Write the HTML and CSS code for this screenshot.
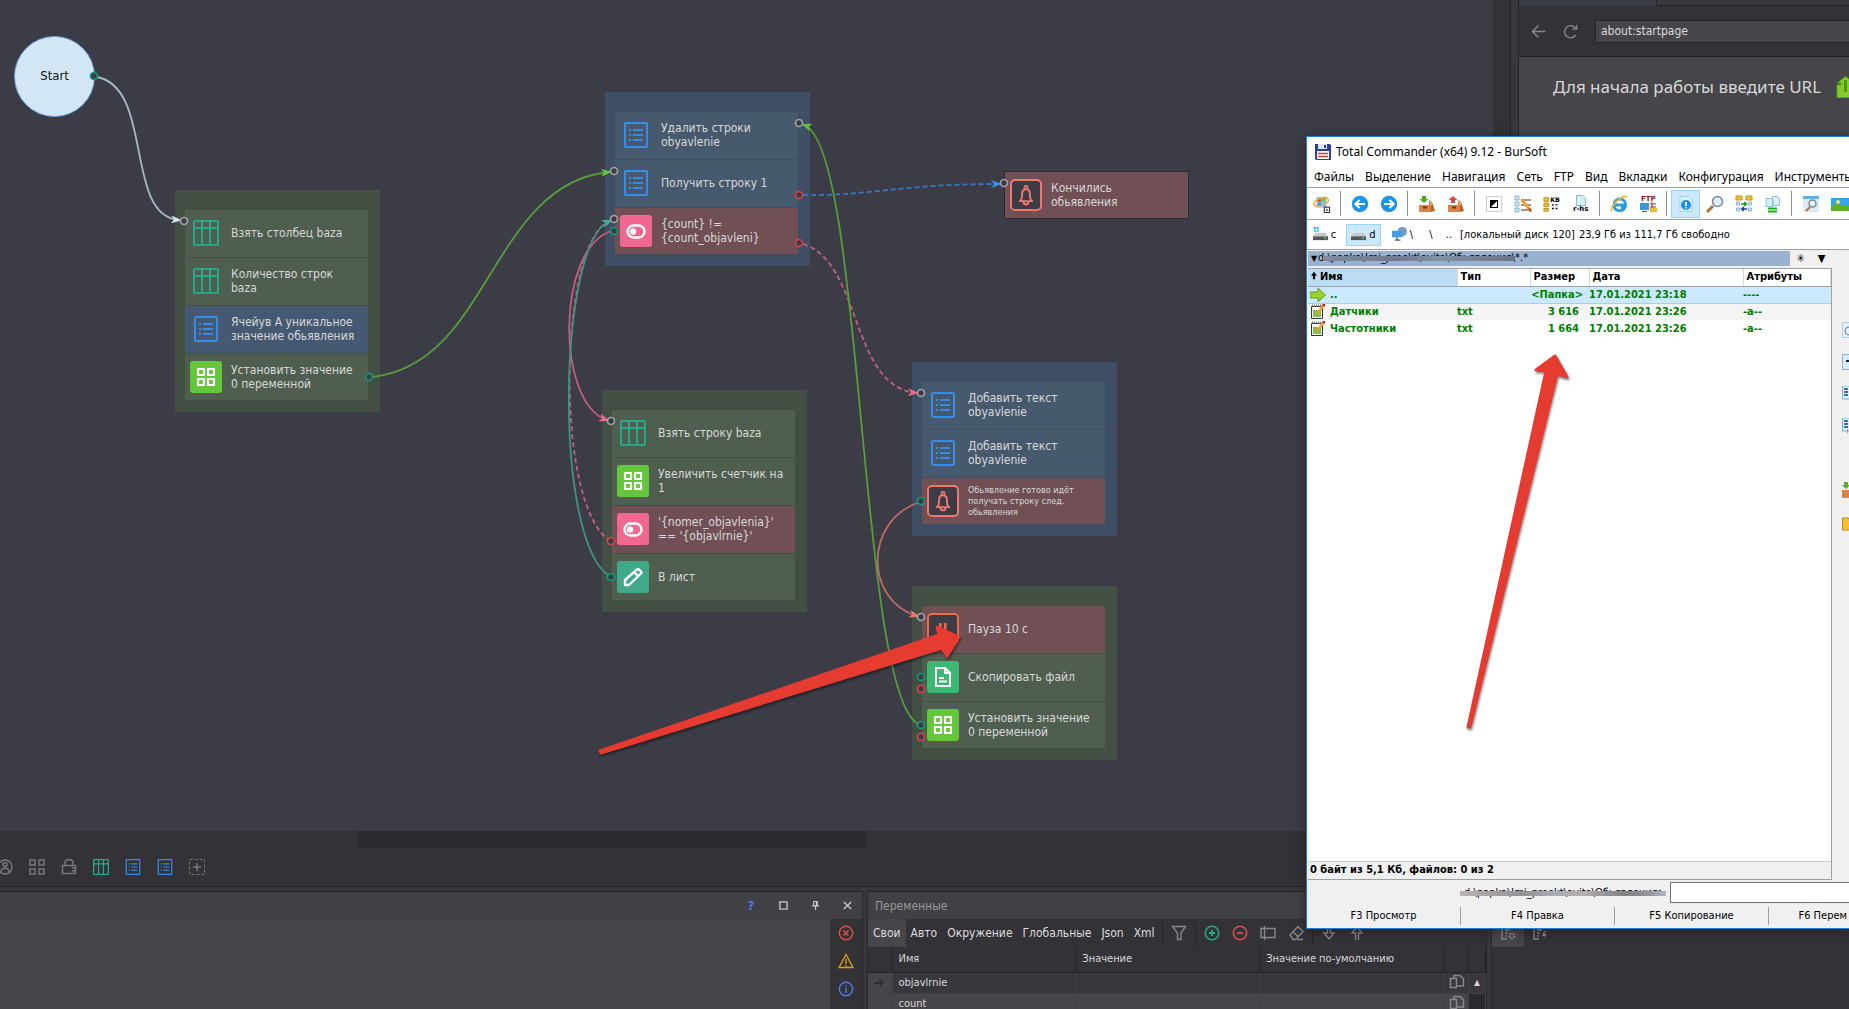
FILE: index.html
```html
<!DOCTYPE html>
<html lang="ru">
<head>
<meta charset="utf-8">
<title>Редактор проекта</title>
<link rel="stylesheet" href="styles.css">
</head>
<body>
<svg class="sprite" aria-hidden="true">
  <symbol id="i-table" viewBox="0 0 26 26"><path d="M1 2a1 1 0 0 1 1-1h22a1 1 0 0 1 1 1v22a1 1 0 0 1-1 1H2a1 1 0 0 1-1-1zM1 8h24M9 1v24M17 1v24" fill="none" stroke="currentColor" stroke-width="2"/></symbol>
  <symbol id="i-list" viewBox="0 0 26 26"><rect x="2" y="1" width="22" height="24" rx="1" fill="none" stroke="currentColor" stroke-width="2"/><path d="M6 8h2M6 13h2M6 18h2M10 8h10M10 13h10M10 18h10" stroke="currentColor" stroke-width="2"/></symbol>
  <symbol id="i-squares" viewBox="0 0 32 32"><path d="M8 8h6v6H8zM18 8h6v6h-6zM8 18h6v6H8zM18 18h6v6h-6z" fill="none" stroke="currentColor" stroke-width="2.200" stroke-linejoin="round"/></symbol>
  <symbol id="i-toggle" viewBox="0 0 32 32"><rect x="7.500" y="10.500" width="17" height="12" rx="6" fill="none" stroke="currentColor" stroke-width="2.400"/><circle cx="13" cy="16.500" r="3.200" fill="currentColor"/></symbol>
  <symbol id="i-pencil" viewBox="0 0 32 32"><path d="M8 24v-5L20 8.500q1-.9 2 0l2 2q1 1 0 2L12 24zM17.500 11.500l4 4" fill="none" stroke="currentColor" stroke-width="2.400" stroke-linejoin="round"/></symbol>
  <symbol id="i-file" viewBox="0 0 32 32"><path d="M9 7h9l5 5v13H9zM18 7v5h5M12 17h5M12 20.500h8" fill="none" stroke="currentColor" stroke-width="2"/></symbol>
  <symbol id="i-bell" viewBox="0 0 32 32"><path d="M8 23h16M10 22.500q1.500-2 1.500-7.500c0-3.500 2-5.500 4.500-5.500s4.500 2 4.500 5.500q0 5.500 1.500 7.500M13 24c.5 3.500 5.500 3.500 6 0" fill="none" stroke="currentColor" stroke-width="2.200"/><circle cx="16" cy="7.500" r="1.900" fill="none" stroke="currentColor" stroke-width="1.800"/></symbol>
  <symbol id="i-pause" viewBox="0 0 32 32"><path d="M13 9v13M18.500 9v13" stroke="currentColor" stroke-width="3"/></symbol>
  <symbol id="i-doc" viewBox="0 0 18 18"><path d="M1.500 4.500h6v9h-6zM5 4V1.500h6l3.500 3.500v7H8" fill="none" stroke="currentColor" stroke-width="1.500"/></symbol>
  <symbol id="i-drive" viewBox="0 0 16 16"><path d="M3 6h10l3 4H0z" fill="#c9c9c9"/><path d="M0 10h16v4H0z" fill="#55585a"/><path d="M12 12h2" stroke="#4be04b" stroke-width="1.500"/></symbol>
  <symbol id="i-note" viewBox="0 0 16 16"><path d="M1.500 2.500h11v12h-11z" fill="#fff" stroke="#333"/><path d="M2 1.500h10" stroke="#777" stroke-width="2" stroke-dasharray="1 1"/><path d="M3 6h8v7H3z" fill="#7fc04a"/><path d="M7 10l7-9" stroke="#f0a020" stroke-width="2.500"/><path d="M13 2l1.500-2" stroke="#b02020" stroke-width="2.500"/></symbol>
  <symbol id="i-crate" viewBox="0 0 18 18"><path d="M1 10h12v7H1z" fill="#dd8244"/><path d="M13 17l4-1-3-9-3-2v5h2z" fill="#b8642c"/><path d="M11 5l3 2v3h-2z" fill="#e8a26d"/><path d="M5 12.500h4" stroke="#5b381f" stroke-width="2"/></symbol>
</svg>

<div class="app">
  <div class="upper">
    <main class="workspace">
      <div class="canvas">
        <section class="group green g-base">
          <div class="node green"><svg class="ic teal"><use href="#i-table"/></svg><span>Взять столбец baza</span></div>
          <div class="node green"><svg class="ic teal"><use href="#i-table"/></svg><span>Количество строк<br>baza</span></div>
          <div class="node blue"><svg class="ic azure"><use href="#i-list"/></svg><span>Ячейув А уникальное<br>значение обьявления</span></div>
          <div class="node green"><svg class="tile lime"><use href="#i-squares"/></svg><span>Установить значение<br>0 переменной</span></div>
        </section>
        <section class="group blue g-lines">
          <div class="node steel"><svg class="ic azure"><use href="#i-list"/></svg><span>Удалить строки<br>obyavlenie</span></div>
          <div class="node steel"><svg class="ic azure"><use href="#i-list"/></svg><span>Получить строку 1</span></div>
          <div class="node red"><svg class="tile pink"><use href="#i-toggle"/></svg><span>{count} !=<br>{count_objavleni}</span></div>
        </section>
        <section class="group green g-row">
          <div class="node green"><svg class="ic teal"><use href="#i-table"/></svg><span>Взять строку baza</span></div>
          <div class="node green"><svg class="tile lime"><use href="#i-squares"/></svg><span>Увеличить счетчик на<br>1</span></div>
          <div class="node red"><svg class="tile pink"><use href="#i-toggle"/></svg><span>'{nomer_objavlenia}'<br>== '{objavlrnie}'</span></div>
          <div class="node green"><svg class="tile sea"><use href="#i-pencil"/></svg><span>В лист</span></div>
        </section>
        <section class="group blue g-add">
          <div class="node steel"><svg class="ic azure"><use href="#i-list"/></svg><span>Добавить текст<br>obyavlenie</span></div>
          <div class="node steel"><svg class="ic azure"><use href="#i-list"/></svg><span>Добавить текст<br>obyavlenie</span></div>
          <div class="node red"><svg class="tile frame"><use href="#i-bell"/></svg><span class="small">Обьявление готово идёт<br>получать строку след.<br>обьявления</span></div>
        </section>
        <section class="group green g-pause">
          <div class="node red"><svg class="tile frame orange"><use href="#i-pause"/></svg><span>Пауза 10 с</span></div>
          <div class="node green"><svg class="tile mint"><use href="#i-file"/></svg><span>Скопировать файл</span></div>
          <div class="node green"><svg class="tile lime"><use href="#i-squares"/></svg><span>Установить значение<br>0 переменной</span></div>
        </section>
        <div class="node red single"><svg class="tile frame"><use href="#i-bell"/></svg><span>Кончились<br>обьявления</span></div>
        <div class="start">Start</div>

        <svg class="wires" aria-hidden="true">
          <defs>
            <marker id="a-white" markerWidth="11" markerHeight="8" refX="8" refY="4" orient="auto" markerUnits="userSpaceOnUse"><path d="M0 0l11 4-11 4 3-4z" fill="#d3e6f5"/></marker>
            <marker id="a-green" markerWidth="11" markerHeight="8" refX="8" refY="4" orient="auto" markerUnits="userSpaceOnUse"><path d="M0 0l11 4-11 4 3-4z" fill="#63c63b"/></marker>
            <marker id="a-blue" markerWidth="11" markerHeight="8" refX="8" refY="4" orient="auto" markerUnits="userSpaceOnUse"><path d="M0 0l11 4-11 4 3-4z" fill="#3b8fea"/></marker>
            <marker id="a-pink" markerWidth="11" markerHeight="8" refX="8" refY="4" orient="auto" markerUnits="userSpaceOnUse"><path d="M0 0l11 4-11 4 3-4z" fill="#f0688f"/></marker>
            <marker id="a-teal" markerWidth="11" markerHeight="8" refX="8" refY="4" orient="auto" markerUnits="userSpaceOnUse"><path d="M0 0l11 4-11 4 3-4z" fill="#3fae90"/></marker>
            <marker id="a-salmon" markerWidth="11" markerHeight="8" refX="8" refY="4" orient="auto" markerUnits="userSpaceOnUse"><path d="M0 0l11 4-11 4 3-4z" fill="#f0776e"/></marker>
          </defs>
          <g fill="none" stroke-width="1.800">
            <path d="M97 77C154 88 124 216 179 220" stroke="#a9b8c5" marker-end="url(#a-white)"/>
            <path d="M372 377C490 365 490 184 609 172" stroke="#579c3d" marker-end="url(#a-green)"/>
            <path d="M803 195C870 196 900 184 999 184" stroke="#3c77bd" stroke-dasharray="5 3" marker-end="url(#a-blue)"/>
            <path d="M803 244C862 262 850 386 916 393" stroke="#c25f7e" stroke-dasharray="5 3" marker-end="url(#a-pink)"/>
            <path d="M918 724C858 690 864 145 804 125" stroke="#579c3d" marker-end="url(#a-green)"/>
            <path d="M611 231C556 250 556 403 607 420" stroke="#c25f7e" marker-end="url(#a-pink)"/>
            <path d="M611 541C554 510 558 240 610 221" stroke="#c25f7e" stroke-dasharray="5 3" marker-end="url(#a-pink)"/>
            <path d="M611 577C552 545 558 240 610 221" stroke="#439080" marker-end="url(#a-teal)"/>
            <path d="M920 502C864 520 864 600 917 616" stroke="#bf6a66" marker-end="url(#a-salmon)"/>
          </g>
          <g class="ports" stroke-width="1.700" stroke="#a3a3a6">
            <circle cx="184" cy="221" r="3.500"/><circle cx="614" cy="171" r="3.500"/><circle cx="799" cy="123" r="3.500"/>
            <circle cx="614" cy="219" r="3.500"/><circle cx="1004" cy="183" r="3.500"/><circle cx="611" cy="421" r="3.500"/>
            <circle cx="921" cy="393" r="3.500"/><circle cx="921" cy="617" r="3.500"/>
            <g stroke="#149a78"><circle cx="94" cy="76" r="3.500"/><circle cx="369" cy="377" r="3.500"/><circle cx="614" cy="231" r="3.500"/><circle cx="611" cy="577" r="3.500"/><circle cx="921" cy="501" r="3.500"/><circle cx="921" cy="677" r="3.500"/><circle cx="921" cy="725" r="3.500"/></g>
            <g stroke="#d84343"><circle cx="799" cy="195" r="3.500"/><circle cx="799" cy="243" r="3.500"/><circle cx="611" cy="541" r="3.500"/><circle cx="921" cy="689" r="3.500"/><circle cx="921" cy="737" r="3.500"/></g>
          </g>
        </svg>
      </div>
      <div class="hscroll"><div class="thumb"></div></div>
      <div class="dock">
        <button aria-label="Профиль"><svg viewBox="0 0 16 16"><g fill="none" stroke="currentColor" stroke-width="1.500"><circle cx="8" cy="8" r="7"/><circle cx="8" cy="5.500" r="2"/><path d="M4 13c0-5 8-5 8 0"/></g></svg></button>
        <button aria-label="Блоки"><svg viewBox="0 0 16 16"><path d="M1 1h5v5H1zM10 1h5v5h-5zM1 10h5v5H1zM10 10h5v5h-5z" fill="none" stroke="currentColor" stroke-width="1.500"/></svg></button>
        <button aria-label="Замок"><svg viewBox="0 0 16 16"><path d="M1.500 6.500h13v8h-13zM4 6V4q0-3.500 4-3.500T12 4v2M11 9h3M11 12h3" fill="none" stroke="currentColor" stroke-width="1.500"/></svg></button>
        <button class="teal" aria-label="Таблица"><svg><use href="#i-table"/></svg></button>
        <button class="azure" aria-label="Список"><svg><use href="#i-list"/></svg></button>
        <button class="azure" aria-label="Список 2"><svg><use href="#i-list"/></svg></button>
        <button aria-label="Добавить"><svg viewBox="0 0 16 16"><path d="M.5.500h15v15H.5z" fill="none" stroke="currentColor" stroke-dasharray="3 2"/><path d="M8 4v8M4 8h8" stroke="currentColor" stroke-width="1.500"/></svg></button>
      </div>
    </main>
    <div class="vscroll"></div>
    <aside class="browser">
      <div class="tabs"><div class="tab"></div></div>
      <div class="nav">
        <button aria-label="Назад"><svg viewBox="0 0 16 16"><path d="M15 8H2M8 1.500L1.500 8 8 14.500" fill="none" stroke="currentColor" stroke-width="1.500"/></svg></button>
        <button aria-label="Обновить"><svg viewBox="0 0 16 16"><path d="M13.500 12A6.500 6.500 0 1 1 13.500 4.500M14.500 1v4.500H10" fill="none" stroke="currentColor" stroke-width="1.500"/></svg></button>
        <input type="text" value="about:startpage" aria-label="URL">
      </div>
      <div class="page"><span>Для начала работы введите URL</span><svg viewBox="0 0 22 22"><path d="M1 21.500V9h4V7H1.500L9.500.500l8 6.500H14v7h7v7.500z" fill="#86c92f" stroke="#5ca51b"/><path d="M9.500 4v12" stroke="#4f9c12" stroke-width="3"/></svg></div>
    </aside>
  </div>

  <div class="lower">
    <section class="panel log">
      <header class="bar">
        <button class="help" aria-label="Справка">?</button>
        <button aria-label="Развернуть"><svg viewBox="0 0 10 10"><path d="M1 1h8v8H1z" fill="none" stroke="currentColor" stroke-width="1.500"/></svg></button>
        <button aria-label="Закрепить"><svg viewBox="0 0 10 10"><path d="M3 .5h4v5H3zM6 1v4M1 5.500h8M5 6v4" fill="none" stroke="currentColor" stroke-width="1.300"/></svg></button>
        <button aria-label="Закрыть"><svg viewBox="0 0 10 10"><path d="M1 1l8 8M9 1L1 9" stroke="currentColor" stroke-width="1.500"/></svg></button>
      </header>
      <div class="log-body">
        <div class="log-text"></div>
        <div class="log-side">
          <button class="err" aria-label="Ошибки"><svg viewBox="0 0 16 16"><circle cx="8" cy="8" r="6.700" fill="none" stroke="currentColor" stroke-width="1.400"/><path d="M5.500 5.500l5 5M10.500 5.500l-5 5" stroke="currentColor" stroke-width="1.500"/></svg></button>
          <button class="warn" aria-label="Предупреждения"><svg viewBox="0 0 16 16"><path d="M8 1.500L15 14.500H1zM8 6v5M8 12v1.500" fill="none" stroke="currentColor" stroke-width="1.400"/></svg></button>
          <button class="info" aria-label="Сведения"><svg viewBox="0 0 16 16"><circle cx="8" cy="8" r="6.700" fill="none" stroke="currentColor" stroke-width="1.400"/><path d="M8 4v1.500M8 7v5" stroke="currentColor" stroke-width="1.500"/></svg></button>
        </div>
      </div>
    </section>

    <section class="panel vars">
      <header class="bar title">Переменные</header>
      <nav class="vtabs">
        <button class="on">Свои</button><button>Авто</button><button>Окружение</button><button>Глобальные</button><button>Json</button><button>Xml</button>
        <i class="sep"></i>
        <button class="gl" aria-label="Фильтр"><svg viewBox="0 0 16 16"><path d="M1.500 1.500h13L10 8v6.500H6.500V8z" fill="none" stroke="currentColor" stroke-width="1.400"/></svg></button>
        <i class="sep"></i>
        <button class="gl teal" aria-label="Добавить переменную"><svg viewBox="0 0 16 16"><circle cx="8" cy="8" r="6.700" fill="none" stroke="currentColor" stroke-width="1.500"/><path d="M8 5v6M5 8h6" stroke="currentColor" stroke-width="1.800"/></svg></button>
        <button class="gl err" aria-label="Удалить переменную"><svg viewBox="0 0 16 16"><circle cx="8" cy="8" r="6.700" fill="none" stroke="currentColor" stroke-width="1.500"/><path d="M5 8h6" stroke="currentColor" stroke-width="1.800"/></svg></button>
        <button class="gl" aria-label="Переименовать"><svg viewBox="0 0 16 16"><path d="M1 3.500h14v9H1zM4.500 1v14" fill="none" stroke="currentColor" stroke-width="1.400"/></svg></button>
        <button class="gl" aria-label="Очистить"><svg viewBox="0 0 16 16"><path d="M2 10L10 1.500l5 5-7.500 8H5zM5 7l5.500 5M9 14.500h6" fill="none" stroke="currentColor" stroke-width="1.400"/></svg></button>
        <i class="sep"></i>
        <button class="gl" aria-label="Вниз"><svg viewBox="0 0 16 16"><path d="M6.500 1v7H3l5 6 5-6H9.500V1" fill="none" stroke="currentColor" stroke-width="1.400"/></svg></button>
        <button class="gl" aria-label="Вверх"><svg viewBox="0 0 16 16"><path d="M6.500 15V8H3l5-6 5 6H9.500v7" fill="none" stroke="currentColor" stroke-width="1.400"/></svg></button>
      </nav>
      <table class="vtable">
        <colgroup><col class="c-mark"><col><col><col><col class="c-copy"><col class="c-scroll"></colgroup>
        <thead><tr><th></th><th>Имя</th><th>Значение</th><th>Значение по-умолчанию</th><th></th><th></th></tr></thead>
        <tbody>
          <tr><td class="mark"><svg viewBox="0 0 10 10"><path d="M0 5h8.500M5 1l4 4-4 4" fill="none" stroke="currentColor"/></svg></td><td>objavlrnie</td><td></td><td></td><td class="copy"><svg><use href="#i-doc"/></svg></td><td class="up">▲</td></tr>
          <tr class="alt"><td class="mark"></td><td>count</td><td></td><td></td><td class="copy"><svg><use href="#i-doc"/></svg></td><td class="track"></td></tr>
        </tbody>
      </table>
    </section>

    <section class="panel side">
      <header class="bar"></header>
      <nav class="vtabs">
        <button class="gl on" aria-label="Настройки"><svg viewBox="0 0 16 16"><path d="M9 1H2v13h5M5 5h5M5 8h3M5 11h2" fill="none" stroke="currentColor" stroke-width="1.400"/><circle cx="12" cy="11" r="2.500" fill="none" stroke="currentColor" stroke-width="2" stroke-dasharray="2 1"/></svg></button>
        <button class="gl" aria-label="Действия"><svg viewBox="0 0 16 16"><path d="M9 1H2v13h5M5 5h5M5 8h3M5 11h2" fill="none" stroke="currentColor" stroke-width="1.400"/><path d="M12 6l-2 5h3l-2 4 4-6h-3l2-3z" fill="currentColor"/></svg></button>
      </nav>
    </section>
  </div>

  <div class="tc">
    <header class="tc-title"><svg viewBox="0 0 16 16"><path d="M0 0h15l1 1v15H1l-1-1z" fill="#2b3f9c"/><path d="M3 0h9v5H3z" fill="#dfe6f5"/><path d="M9 1h2v3H9z" fill="#2b3f9c"/><path d="M2 7h12v8H2z" fill="#fff"/><path d="M3 9.500h10M3 12.500h10" stroke="#d8402f" stroke-width="1.500"/></svg>Total Commander (x64) 9.12 - BurSoft</header>
    <nav class="tc-menu"><button>Файлы</button><button>Выделение</button><button>Навигация</button><button>Сеть</button><button>FTP</button><button>Вид</button><button>Вкладки</button><button>Конфигурация</button><button>Инструменты</button></nav>
    <div class="tc-tools">
      <button aria-label="Запуск"><svg viewBox="0 0 20 20"><path d="M4 2h11v12H4z" fill="#8cc5ea"/><path d="M5 4h4v4H5z" fill="#e05a2b"/><path d="M10 3h4v4h-4z" fill="#7ab93a"/><path d="M5 9h4v3H5z" fill="#3c8ee0"/><path d="M1 11C0 5 15 0 17 5S5 14 1 11z" fill="none" stroke="#f0a63c" stroke-width="1.500"/><path d="M12.500 13.500h6v6h-6z" fill="#fff" stroke="#000"/><path d="M14 16h3l-1.500 2z"/></svg></button><i></i>
      <button aria-label="Назад"><svg viewBox="0 0 18 18"><circle cx="9" cy="9" r="8.200" fill="#1c94ea"/><path d="M14 9H5M8.500 5L4.500 9l4 4" fill="none" stroke="#fff" stroke-width="2.200"/></svg></button>
      <button aria-label="Вперёд"><svg viewBox="0 0 18 18"><circle cx="9" cy="9" r="8.200" fill="#1c94ea"/><path d="M4 9h9M9.500 5l4 4-4 4" fill="none" stroke="#fff" stroke-width="2.200"/></svg></button><i></i>
      <button aria-label="Упаковать"><svg viewBox="0 0 18 18"><use href="#i-crate" width="18" height="18"/><path d="M4 1h4v3h2.500L6 8 1.500 4H4z" fill="#4ca82f"/></svg></button>
      <button aria-label="Распаковать"><svg viewBox="0 0 18 18"><use href="#i-crate" width="18" height="18"/><path d="M4 8h4V5h2.500L6 1 1.500 5H4z" fill="#d9493f"/></svg></button><i></i>
      <button aria-label="Инвертировать"><svg viewBox="0 0 18 18"><path d="M1.500 1.500h15v15h-15z" fill="none" stroke="#999" stroke-dasharray="1 1"/><path d="M5 5h8v8H5z"/><path d="M12 6v6H6z" fill="#fff"/></svg></button>
      <button aria-label="Сравнить"><svg viewBox="0 0 18 18"><path d="M1 1h4v4H1zM1 7h4v4H1zM1 13h4v4H1z" fill="#cbe6f4" stroke="#86b5d0"/><path d="M7 5h10M7 10h10M7 15h10" stroke="#333"/><path d="M8 5l8 10" stroke="#f5a623" stroke-width="3"/><path d="M15 13.500l2 3" stroke="#c22" stroke-width="2"/></svg></button>
      <button aria-label="Размер"><svg viewBox="0 0 20 18"><path d="M1 2h5v4H1zM1 8h5v4H1zM1 14h5v3H1z" fill="#f0c030" stroke="#b98a18"/><text x="8" y="7" font-size="7" font-weight="bold" font-family="DejaVu Sans">KB</text><path d="M10 10h2M14 10h2M10 14h2M14 14h2" stroke="#000" stroke-width="1.500"/></svg></button>
      <button aria-label="Скрытые"><svg viewBox="0 0 18 18"><path d="M4.500.500h6l3 3v7h-9z" fill="#d8eef9" stroke="#8bbdd8"/><text x="1" y="16" font-size="7" font-weight="bold" font-family="DejaVu Sans">r-hs</text></svg></button><i></i>
      <button aria-label="Браузер"><svg viewBox="0 0 18 18"><path d="M4 10h11.500C16 2 4 2 4 10c0 7 9 7 11 2.500h-4" fill="none" stroke="#2b9be0" stroke-width="2.800"/><path d="M2 16C-1 12 13-1 17 2" fill="none" stroke="#f2b92d" stroke-width="1.800"/></svg></button>
      <button aria-label="FTP"><svg viewBox="0 0 18 18"><text x="2" y="6" font-size="7" font-weight="bold" font-family="DejaVu Sans" fill="#8a1c1c">FTP</text><path d="M1 8h9v7H1z" fill="#3f97d8"/><path d="M3 16.500h5" stroke="#555"/><path d="M11 9h6M11 12h6M13 7v7" stroke="#a33"/><path d="M11 13h7v4h-7z" fill="#efb92e"/></svg></button><i></i>
      <button class="on" aria-label="Просмотр"><svg viewBox="0 0 18 18"><path d="M3 1.500h9l3 3v12H3z" fill="#d9effa" stroke="#9fd0ea"/><circle cx="9" cy="10" r="5" fill="#1d8fe5"/><path d="M9 7v4M9 12v1.500" stroke="#fff" stroke-width="1.800"/></svg></button>
      <button aria-label="Поиск"><svg viewBox="0 0 18 18"><path d="M1 17l6-6" stroke="#b5703a" stroke-width="3"/><circle cx="11.500" cy="6.500" r="5" fill="#dff0fa" stroke="#7d8790" stroke-width="1.500"/></svg></button>
      <button aria-label="Групповое"><svg viewBox="0 0 18 18"><path d="M1 1h6v4H1zM11 1h6v4h-6z" fill="#f0c030" stroke="#c0901c"/><path d="M1.500 7h3v3h-3zM1.500 13h3v3h-3zM13.500 7h3v3h-3zM13.500 13h3v3h-3z" fill="#d3eaf6" stroke="#86b5d0"/><path d="M6 9h5M9 7l2.500 2L9 11" stroke="#1d9a1d" fill="none" stroke-width="1.500"/><path d="M12 14H7M9 12l-2.500 2L9 16" stroke="#223bb0" fill="none" stroke-width="1.500"/></svg></button>
      <button aria-label="Синхронизация"><svg viewBox="0 0 18 18"><path d="M2 3.500h5l2 2v6H2zM8.500 1.500h5l2 2v7h-7z" fill="#d8eef9" stroke="#8bbdd8"/><path d="M4 13.500h9M4 16.500h9" stroke="#15b315" stroke-width="2"/></svg></button><i></i>
      <button aria-label="Найти файлы"><svg viewBox="0 0 18 18"><path d="M1 1h16v16H1z" fill="#d9ebf6"/><path d="M1 1h16v3H1z" fill="#58b1e8"/><path d="M4 16l4-4" stroke="#b5703a" stroke-width="2.200"/><circle cx="10.500" cy="8.500" r="3.500" fill="#eef8fd" stroke="#7d8790" stroke-width="1.500"/></svg></button>
      <button aria-label="Картинка"><svg viewBox="0 0 18 18"><path d="M0 3h18v13H0z" fill="#35a5ea"/><path d="M0 12q6-6 10-1 4-3 8 1v4H0z" fill="#5fae2c"/><circle cx="7" cy="7" r="2" fill="#ffe14a"/></svg></button>
    </div>
    <div class="tc-drives">
      <button class="dr"><svg viewBox="0 0 16 16"><use href="#i-drive" width="16" height="16"/><path d="M1 0h2v2H1zM4 0h2v2H4zM1 3h2v2H1zM4 3h2v2H4z" fill="#18b4f0"/></svg>c</button>
      <button class="dr on"><svg><use href="#i-drive"/></svg>d</button>
      <button class="dr"><svg viewBox="0 0 16 16"><circle cx="11" cy="5" r="5" fill="#6f9fbe"/><path d="M0 4h11v7H0z" fill="#3f9fe2"/><path d="M3 14h6M5.500 11v3" stroke="#557" stroke-width="1.500"/></svg>\</button>
      <button class="lone">\</button><button class="lone">..</button>
      <span>[локальный диск 120]</span><span>23,9 Гб из 111,7 Гб свободно</span>
    </div>
    <div class="tc-main">
      <div class="tc-left">
        <div class="tc-path"><div class="path"><i>▼</i><span class="masked">d:\papka\!mi_proekt\avito\Обьявления\</span>*.*</div><button aria-label="Избранное">✳</button><button aria-label="История">▼</button></div>
        <div class="tc-files">
          <table>
            <colgroup><col class="f-name"><col class="f-type"><col class="f-size"><col class="f-date"><col></colgroup>
            <thead><tr><th class="sorted"><svg viewBox="0 0 8 10"><path d="M4 0l4 5H5.500v5h-3V5H0z"/></svg>Имя</th><th>Тип</th><th>Размер</th><th>Дата</th><th>Атрибуты</th></tr></thead>
            <tbody>
              <tr class="sel"><td><svg viewBox="0 0 16 16"><path d="M0 5h8V1l7.500 7L8 15v-4H0z" fill="#9bd62e" stroke="#5f9a1a"/></svg>..</td><td></td><td class="num dir">&lt;Папка&gt;</td><td>17.01.2021 23:18</td><td>----</td></tr>
              <tr class="odd"><td><svg><use href="#i-note"/></svg>Датчики</td><td>txt</td><td class="num">3 616</td><td>17.01.2021 23:26</td><td>-a--</td></tr>
              <tr><td><svg><use href="#i-note"/></svg>Частотники</td><td>txt</td><td class="num">1 664</td><td>17.01.2021 23:26</td><td>-a--</td></tr>
            </tbody>
          </table>
          <div class="tc-status">0 байт из 5,1 Кб, файлов: 0 из 2</div>
        </div>
      </div>
      <div class="tc-strip">
        <svg viewBox="0 0 16 16"><path d="M.5.500h15v15H.5z" fill="#e2f2fa" stroke="#a9cfe2"/><circle cx="7" cy="9" r="4" fill="none" stroke="#678"/></svg>
        <svg viewBox="0 0 16 16"><path d="M.5.500h15v15H.5z" fill="#d6ebf7" stroke="#8ab5cd"/><path d="M4 7h8" stroke="#222" stroke-width="2"/></svg>
        <svg viewBox="0 0 16 16"><path d="M.5 0h8v13h-8z" fill="#dceffa" stroke="#75b4d8"/><path d="M2 3h4M2 6h4M2 9h4" stroke="#456f8c" stroke-width="2"/></svg>
        <svg viewBox="0 0 16 16"><path d="M.5 0h8v13h-8z" fill="#dceffa" stroke="#75b4d8"/><path d="M2 3h4M2 6h4M2 9h4" stroke="#456f8c" stroke-width="2"/><path d="M5.500 11v4" stroke="#e08080"/></svg>
        <svg class="far" viewBox="0 0 16 16"><path d="M0 8h14v8H0z" fill="#dd8244"/><path d="M2 0h4v3h2L4 7 0 3h2z" fill="#5aae2c"/></svg>
        <svg class="mid" viewBox="0 0 16 16"><path d="M.5 2h6l1 2h8v10H.5z" fill="#f1c232" stroke="#c08a18"/></svg>
      </div>
    </div>
    <div class="tc-cmd"><label for="cmd"><span class="masked pale">d:\papka\!mi_proekt\avito\Обьявления&gt;</span></label><input id="cmd" type="text"></div>
    <div class="tc-keys"><button>F3 Просмотр</button><button>F4 Правка</button><button>F5 Копирование</button><button>F6 Перем</button></div>
  </div>

  <svg class="pointers" aria-hidden="true">
    <g fill="#e63b30" stroke="#e63b30" stroke-width="3" stroke-linejoin="round">
      <path d="M600 751L939 635 937 627 959 637 947 656 942 648 601 753z"/>
      <path d="M1468 727L1546 371 1536 370 1555 356 1567 377 1557 374 1470 727z"/>
    </g>
  </svg>
</div>
</body>
</html>
```
FILE: styles.css
```css
* { box-sizing: border-box; }
body {
  margin: 0;
  background: #38373c;
  color: #d8d8da;
  font: 12px/14px "DejaVu Sans Condensed", "DejaVu Sans", sans-serif;
  overflow: hidden;
}
button, input { font: inherit; color: inherit; margin: 0; }
button { padding: 0; border: 0; background: none; }
svg { display: block; flex: none; }
.sprite { position: absolute; width: 0; height: 0; }
.teal { color: #26a98a; }
.azure { color: #388ce8; }
.err { color: #e04c4c; }
.warn { color: #e09a1a; }
.info { color: #4a78e8; }

.app { position: relative; min-height: 100vh; display: flex; flex-direction: column; gap: 4px; overflow: hidden; }
.upper { flex: 1; display: flex; border-bottom: 1px solid #242328; }
.workspace { flex: 1; display: flex; flex-direction: column; background: #333237; }
.canvas { position: relative; flex: 1; background: #3c3c46; }
.hscroll { height: 17px; display: flex; }
.thumb { width: 34%; margin-left: 24%; background: #2a292e; }
.dock { height: 38px; display: flex; align-items: center; gap: 16px; margin-left: -3px; color: #77767e; }
.dock svg { width: 16px; height: 16px; }
.vscroll { width: 18px; background: #333237; border-right: 1px solid #242328; }
.browser { width: 331px; margin-left: 7px; border-left: 1px solid #242328; background: #464549; display: flex; flex-direction: column; }
.tabs { height: 6px; border-bottom: 1px solid #242328; background: #38373c; }
.tab { width: 138px; height: 6px; background: #3c3c46; border-right: 1px solid #242328; }
.nav { height: 51px; display: flex; align-items: center; gap: 17px; padding-left: 12px; background: #333237; border-bottom: 1px solid #242328; color: #88878d; }
.nav svg { width: 15px; height: 15px; }
.nav input { flex: 1; min-width: 0; height: 23px; margin-right: -2px; padding: 0 5px; background: #464549; border: 1px solid #242328; color: #dcdcde; }
.page { display: flex; align-items: center; gap: 15px; padding: 18px 0 0 34px; font: 17px/24px "Noto Sans", sans-serif; white-space: nowrap; }
.page svg { width: 22px; height: 22px; }

/* diagram */
.group, .single, .start { position: absolute; }
.group { width: 205px; padding: 20px 12px 12px 10px; display: flex; flex-direction: column; gap: 1px; }
.group.green { background: #424f42; }
.group.blue { background: #3e4e64; }
.g-base { left: 175px; top: 190px; }
.g-lines { left: 605px; top: 92px; }
.g-row { left: 602px; top: 390px; }
.g-add { left: 912px; top: 362px; }
.g-pause { left: 912px; top: 586px; }
.node { height: 47px; display: flex; align-items: center; gap: 9px; padding: 0 0 1px 5px; white-space: nowrap; }
.group .node:last-child { height: 46px; padding-bottom: 0; }
.node.green { background: #505e4f; }
.node.blue { background: #455a72; }
.node.steel { background: #475a6d; }
.node.red { background: #705055; }
.single { left: 1004px; top: 171px; width: 185px; height: 48px; padding-bottom: 0; border: 1px solid #2a2930; }
.ic { width: 26px; height: 26px; margin: 0 3px; }
.tile { width: 32px; height: 32px; border-radius: 3px; color: #fff; }
.lime { background: #63c63b; }
.pink { background: #f0688f; }
.sea { background: #3fa98a; }
.mint { background: #3cb872; }
.frame { background: #3c3c46; color: #f0776e; border: 2px solid; border-radius: 5px; }
.orange { color: #ee6a45; }
.small { font-size: 9px; line-height: 11px; }
.start { left: 14px; top: 36px; width: 81px; height: 81px; padding-bottom: 2px; border: 1px solid #6ea3dc; border-radius: 50%; background: #d3e6f5; color: #111; font-size: 13px; display: flex; align-items: center; justify-content: center; }
.wires, .pointers { position: absolute; left: 0; top: 0; width: 100%; height: 100%; pointer-events: none; }
.ports { fill: #3c3c46; }
.pointers { filter: drop-shadow(1px 2px 1px rgba(0, 0, 0, .45)); }

/* bottom panels */
.lower { height: 118px; display: grid; grid-template-columns: 862fr 618fr 357fr; gap: 6px; overflow: hidden; }
.panel { min-width: 0; border-top: 1px solid #242328; outline: 1px solid #28272c; background: #333237; display: flex; flex-direction: column; }
.bar { height: 27px; flex: none; display: flex; align-items: center; background: #414044; }
.title { padding-left: 7px; color: #98979c; }
.log .bar { justify-content: flex-end; gap: 12px; padding-right: 5px; color: #c8c8ca; }
.log .bar button { width: 20px; display: flex; justify-content: center; }
.log .bar svg { width: 9px; height: 9px; }
.log .help { color: #4a78e8; font-weight: bold; font-size: 13px; }
.log-body { flex: 1; display: flex; }
.log-text { flex: 1; background: #464549; }
.log-side { width: 32px; display: flex; flex-direction: column; align-items: center; gap: 12px; padding-top: 6px; }
.log-side svg { width: 16px; height: 16px; }
.vtabs { height: 28px; flex: none; display: flex; align-items: stretch; color: #dcdcde; white-space: nowrap; }
.vtabs button { padding: 0 5px; display: flex; align-items: center; }
.vtabs .on { background: #464549; }
.vtabs .gl { padding: 0 6px; color: #88878d; }
.vtabs .gl.teal { color: #26a98a; }
.vtabs .gl.err { color: #e04c4c; }
.vtabs .gl svg { width: 16px; height: 16px; }
.side .vtabs .gl { padding: 0 8px; }
.sep { width: 1px; margin: 2px 2px; background: #242328; }
.vtable { width: 100%; border-collapse: collapse; table-layout: fixed; font-size: 11px; }
.vtable th { height: 25px; padding: 0 6px; font-weight: normal; text-align: left; border-right: 1px solid #242328; border-bottom: 1px solid #242328; }
.vtable td { height: 21px; padding: 0 6px; background: #38373c; border-right: 1px solid #414044; border-bottom: 1px solid #414044; }
.vtable .alt td { background: #464549; }
.vtable .mark { background: #464549; color: #1d1d20; }
.mark svg { width: 10px; height: 10px; }
.vtable .copy { color: #88878d; }
.vtable .copy svg { width: 18px; height: 18px; margin: 0 auto; }
.vtable td.copy { padding: 0 0 0 3px; }
.vtable td.up { padding: 0; text-align: center; font-size: 8px; }
.vtable .alt .track { background: #2a292e; }
.c-mark { width: 24px; }
.c-copy { width: 25px; }
.c-scroll { width: 17px; }

/* file manager window */
.tc { position: absolute; left: 1306px; right: 0; top: 136px; border: 1px solid #1a7fd8; border-right: 0; background: #fff; color: #000; font-size: 11px; white-space: nowrap; overflow: hidden; display: flex; flex-direction: column; box-shadow: 0 2px 12px rgba(0, 0, 0, .4); }
.tc-title { height: 30px; display: flex; align-items: center; gap: 5px; padding-left: 8px; font: 12px/16px "Noto Sans", sans-serif; }
.tc-title svg { width: 16px; height: 16px; }
.tc-menu { height: 21px; display: flex; gap: 11px; padding-left: 7px; border-bottom: 1px solid #a0a0a0; font: 12px/16px "Noto Sans", sans-serif; }
.tc-tools { height: 32px; display: flex; align-items: center; border-bottom: 1px solid #a0a0a0; }
.tc-tools button { flex: none; width: 29px; height: 28px; display: flex; align-items: center; justify-content: center; }
.tc-tools svg { width: 18px; height: 18px; }
.tc-tools i { flex: none; width: 1px; height: 25px; margin: 0 4px; background: #909090; }
.tc .on { background: #cce8ff; border: 1px solid #99d1ff; }
.tc-drives { height: 30px; display: flex; align-items: center; gap: 4px; border-bottom: 1px solid #a0a0a0; }
.dr { display: flex; align-items: center; justify-content: center; gap: 3px; width: 35px; height: 22px; }
.dr svg { width: 15px; height: 15px; }
.lone { width: 14px; }
.tc-main { display: flex; background: #f0f0f0; }
.tc-left { flex: none; width: 525px; padding-left: 1px; }
.tc-path { height: 17px; margin-bottom: 1px; display: flex; align-items: center; font-size: 11px; }
.tc-path .path { flex: 1; height: 15px; line-height: 14px; background: #9ab1cf; padding-left: 3px; display: flex; }
.tc-path i { width: 7px; font: 8px/15px "DejaVu Sans", sans-serif; }
.tc-path button { width: 21px; }
.masked { position: relative; }
.masked::after { content: ""; position: absolute; left: 5px; right: 0; top: 5px; height: 5px; background: linear-gradient(90deg, #7d8ba0, #6f7c90 40%, #8290a8 60%, #68748a); }
.masked.pale::after { left: -4px; background: linear-gradient(90deg, #b8b4b6, #929294 30%, #a8abb4 45%, #b4aeae 60%, #808086 80%, #929294 90%, #adb4c4); }
.tc-files { height: 612px; display: flex; flex-direction: column; justify-content: space-between; background: #fff; border: 1px solid #a0a0a0; border-left: 0; }
.tc-files table { width: 100%; border-collapse: collapse; table-layout: fixed; font-weight: bold; }
.tc-files th { height: 17px; padding: 0 0 0 3px; text-align: left; border-right: 1px solid #d8d8d8; border-bottom: 1px solid #a0a0a0; }
.tc-files th.sorted { background: #bcdcf4; }
.tc-files th svg { display: inline-block; width: 6px; height: 9px; margin-right: 3px; }
.tc-files td { height: 17px; padding: 0; color: #007d00; }
.tc-files td svg { display: inline-block; width: 16px; height: 16px; margin: 0 4px 0 2px; vertical-align: middle; }
.tc-files .num { text-align: right; padding-right: 10px; }
.tc-files .num.dir { padding-right: 6px; }
.sel td { background: #cce8ff; border-top: 1px solid #99d1ff; border-bottom: 1px solid #99d1ff; }
.odd td { background: #f4f4f4; }
.f-name { width: 149px; }
.f-type { width: 73px; }
.f-size { width: 59px; }
.f-date { width: 154px; }
.tc-status { height: 18px; padding: 1px 2px; background: #f0f0f0; border-top: 1px solid #c8c8c8; font-weight: bold; }
.tc-strip { flex: 1; padding: 72px 0 0 10px; display: flex; flex-direction: column; gap: 16px; }
.tc-strip svg { width: 16px; height: 16px; }
.tc-strip .far { margin-top: 32px; }
.tc-strip .mid { margin-top: 2px; }
.tc-cmd { display: flex; align-items: center; justify-content: flex-end; gap: 4px; padding-top: 2px; background: #f0f0f0; }
.tc-cmd input { width: 179px; height: 21px; border: 1px solid #707070; border-right: 0; background: #fff; }
.tc-keys { height: 25px; display: flex; align-items: center; background: #f0f0f0; }
.tc-keys button { flex: none; width: 154px; height: 18px; border-right: 1px solid #a0a0a0; }
.tc-keys button:last-child { flex: 1; width: auto; padding-right: 2px; text-align: right; border: 0; }
```
